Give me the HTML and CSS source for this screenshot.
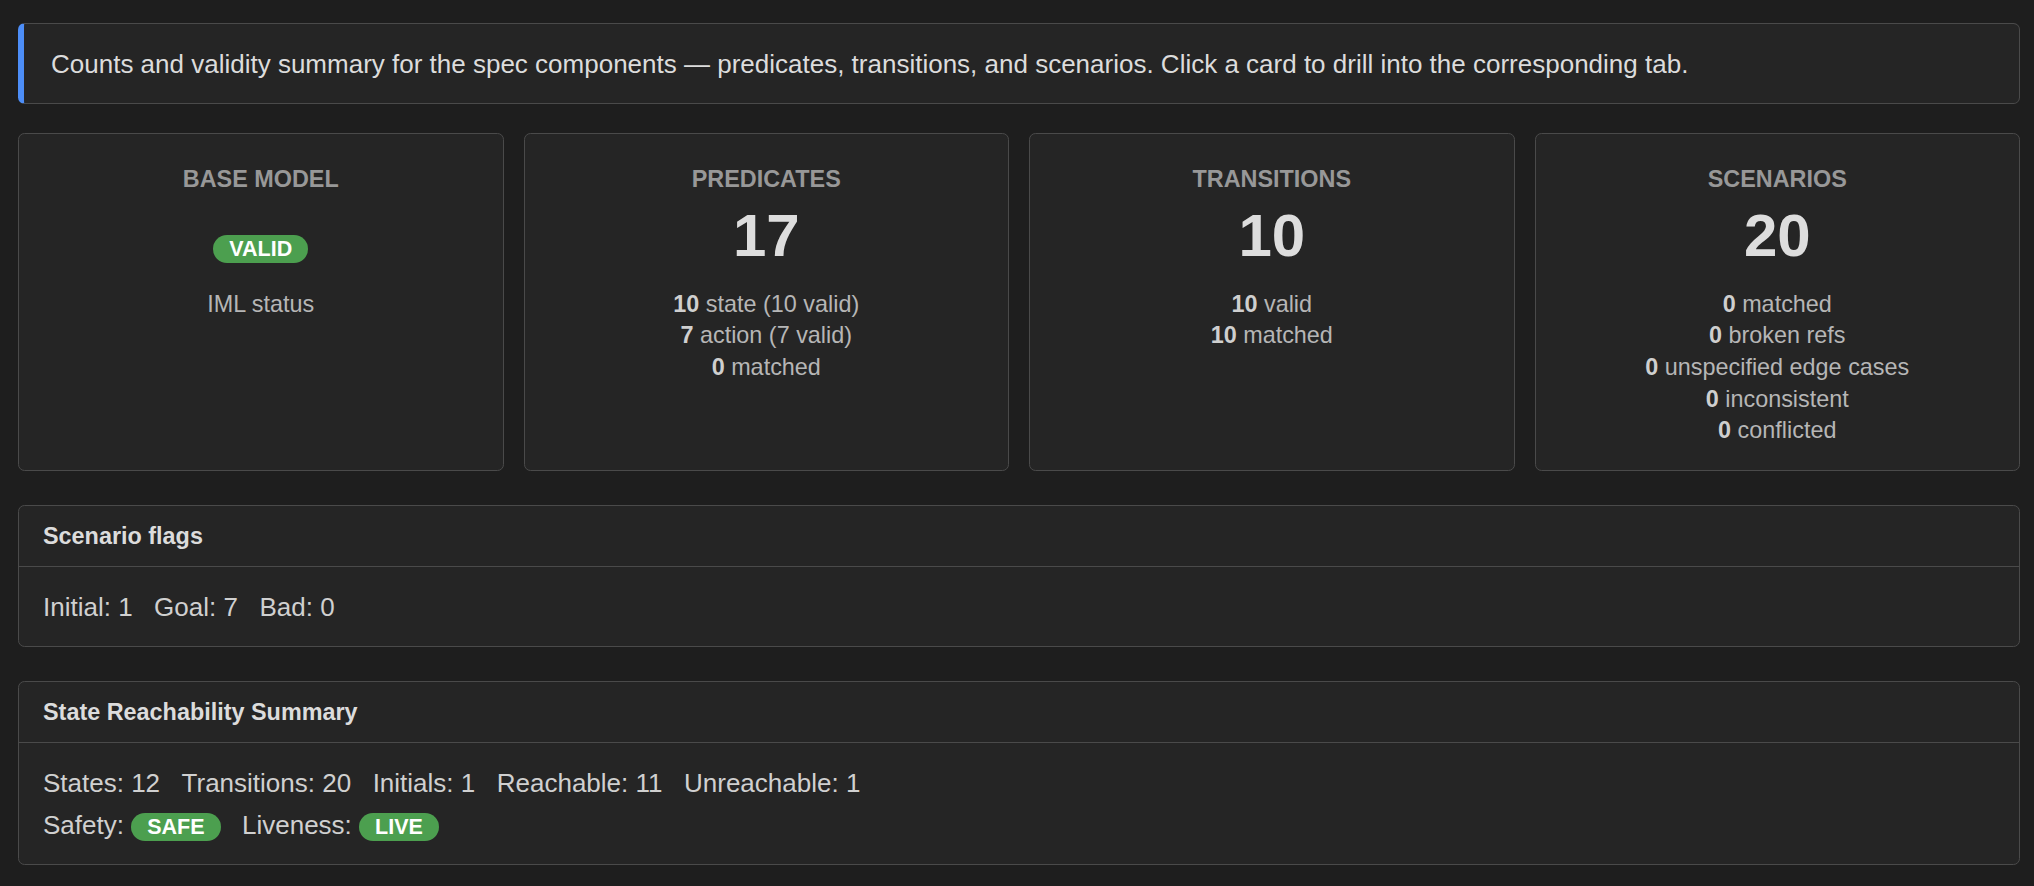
FILE: index.html
```html
<!DOCTYPE html>
<html lang="en">
<head>
<meta charset="utf-8">
<title>Spec summary</title>
<link rel="stylesheet" href="styles.css">
</head>
<body>
<main class="page">
  <div class="banner">Counts and validity summary for the spec components — predicates, transitions, and scenarios. Click a card to drill into the corresponding tab.</div>

  <div class="cards">
    <div class="card">
      <div class="card-label">Base Model</div>
      <div class="card-num"><span class="badge">VALID</span></div>
      <div class="card-details">
        <div>IML status</div>
      </div>
    </div>
    <div class="card">
      <div class="card-label">Predicates</div>
      <div class="card-num">17</div>
      <div class="card-details">
        <div><b>10</b> state (10 valid)</div>
        <div><b>7</b> action (7 valid)</div>
        <div><b>0</b> matched</div>
      </div>
    </div>
    <div class="card">
      <div class="card-label">Transitions</div>
      <div class="card-num">10</div>
      <div class="card-details">
        <div><b>10</b> valid</div>
        <div><b>10</b> matched</div>
      </div>
    </div>
    <div class="card">
      <div class="card-label">Scenarios</div>
      <div class="card-num">20</div>
      <div class="card-details">
        <div><b>0</b> matched</div>
        <div><b>0</b> broken refs</div>
        <div><b>0</b> unspecified edge cases</div>
        <div><b>0</b> inconsistent</div>
        <div><b>0</b> conflicted</div>
      </div>
    </div>
  </div>

  <section class="panel">
    <div class="panel-head">Scenario flags</div>
    <div class="panel-body">
      <div class="row">
        <span>Initial: 1</span>
        <span>Goal: 7</span>
        <span>Bad: 0</span>
      </div>
    </div>
  </section>

  <section class="panel">
    <div class="panel-head">State Reachability Summary</div>
    <div class="panel-body">
      <div class="row">
        <span>States: 12</span>
        <span>Transitions: 20</span>
        <span>Initials: 1</span>
        <span>Reachable: 11</span>
        <span>Unreachable: 1</span>
      </div>
      <div class="row row-second">
        <span>Safety: <span class="badge">SAFE</span></span>
        <span>Liveness: <span class="badge">LIVE</span></span>
      </div>
    </div>
  </section>
</main>
</body>
</html>
```

FILE: styles.css
```css
html, body {
  margin: 0;
  padding: 0;
  background: #1e1e1e;
}

body {
  font-family: "Liberation Sans", Arial, Helvetica, sans-serif;
  color: #d4d4d4;
}

.page {
  padding: 23px 14px 0 18px;
}

.banner {
  background: #252525;
  border: 1px solid #4a4a4a;
  border-left: 6.5px solid #4d8ef8;
  border-radius: 6.5px;
  padding: 19.5px 26px 19.5px 27px;
  font-size: 26px;
  line-height: 40px;
  color: #dcdcdc;
  margin-bottom: 29.3px;
}

.cards {
  display: grid;
  grid-template-columns: repeat(4, 1fr);
  gap: 20px;
  margin-bottom: 34px;
}

.card {
  background: #252525;
  border: 1px solid #4a4a4a;
  border-radius: 6.5px;
  padding: 31.5px 16px 22.8px;
  text-align: center;
}

.card-label {
  font-size: 23.4px;
  line-height: 27px;
  font-weight: bold;
  text-transform: uppercase;
  color: #989898;
}

.card-num {
  margin-top: 7.7px;
  font-size: 60px;
  line-height: 72px;
  font-weight: bold;
  color: #dddddd;
}

.card-details {
  margin-top: 16.2px;
  font-size: 23.4px;
  line-height: 31.7px;
  color: #b6b6b6;
}

.card-details b {
  color: #cfcfcf;
  font-weight: bold;
}

.badge {
  display: inline-block;
  background: #4c9f4f;
  color: #ffffff;
  font-size: 21.5px;
  line-height: 22px;
  font-weight: bold;
  padding: 3px 16px;
  border-radius: 14px;
  vertical-align: baseline;
}

.panel {
  background: #252525;
  border: 1px solid #4a4a4a;
  border-radius: 6.5px;
  margin-bottom: 34px;
}

.panel-head {
  padding: 16px 24px;
  font-size: 23.4px;
  line-height: 28px;
  font-weight: bold;
  color: #dcdcdc;
  border-bottom: 1px solid #4a4a4a;
}

.panel-body {
  padding: 22.5px 24px 20.5px;
  font-size: 26px;
  line-height: 36px;
  color: #d0d0d0;
}

.row {
  display: flex;
  flex-wrap: wrap;
  gap: 21.5px;
}

.row-second {
  margin-top: 6px;
}
```
